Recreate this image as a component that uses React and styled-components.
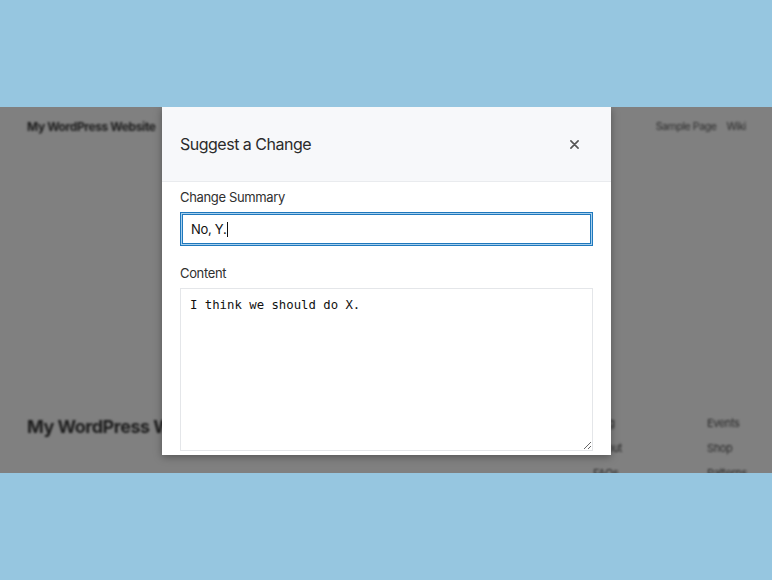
import React from "react";
import styled, { createGlobalStyle } from "styled-components";

const Global = createGlobalStyle`
  html, body { margin: 0; padding: 0; }
  body {
    background: #96c6e0;
    font-family: Inter, "Noto Sans", "Liberation Sans", sans-serif;
  }
`;

const Page = styled.div`
  width: 772px;
  height: 580px;
  padding-top: 107px;
  box-sizing: border-box;
  background: #96c6e0;
`;

const Frame = styled.div`
  position: relative;
  height: 366px;
  overflow: hidden;
  background: #808080;
`;

const Site = styled.div`
  height: 100%;
  display: flex;
  flex-direction: column;
  justify-content: space-between;
  color: #1c1c1c;
  filter: blur(0.9px);
`;

const SiteHeader = styled.header`
  display: flex;
  justify-content: space-between;
  align-items: center;
  height: 38px;
  padding: 0 26px 0 27px;
`;

const SiteTitle = styled.div`
  font-weight: 700;
  font-size: ${(p) => (p.$big ? "18px" : "12px")};
  letter-spacing: ${(p) => (p.$big ? "-0.5px" : "-0.4px")};
`;

const Nav = styled.nav`
  display: flex;
  gap: 10px;
  font-size: 10.5px;
  letter-spacing: -0.4px;
  color: #2a2a2a;
`;

const Footer = styled.footer`
  display: grid;
  grid-template-columns: 566px 114px 1fr;
  padding: 0 0 0 27px;
  height: 70px;
  margin-bottom: -10px;
`;

const FooterCol = styled.div`
  display: flex;
  flex-direction: column;
  gap: 11px;
  font-size: 11px;
  line-height: 14px;
  letter-spacing: -0.4px;
  color: #2a2a2a;
  padding-top: 3px;
`;

const FooterTitleWrap = styled.div`
  padding-top: 3px;
`;

const Modal = styled.div`
  position: absolute;
  left: 162px;
  top: 0;
  width: 449px;
  height: 348px;
  background: #fff;
  box-shadow: 0 2px 8px rgba(0, 0, 0, 0.35);
  display: flex;
  flex-direction: column;
  overflow: hidden;
`;

const ModalHeader = styled.div`
  height: 74px;
  flex: none;
  display: flex;
  align-items: center;
  justify-content: space-between;
  padding: 0 23px 0 18px;
  background: #f7f8fa;
  border-bottom: 1px solid #e9ebee;
`;

const ModalTitle = styled.h2`
  margin: 0;
  font-size: 16px;
  font-weight: 400;
  color: #2b2b2b;
  letter-spacing: -0.5px;
`;

const CloseButton = styled.button`
  border: 0;
  background: none;
  padding: 0;
  width: 28px;
  height: 28px;
  display: flex;
  align-items: center;
  justify-content: center;
  color: #555;
`;

const Body = styled.div`
  padding: 6px 18px 4px;
  display: flex;
  flex-direction: column;
`;

const Label = styled.label`
  font-size: 13px;
  line-height: 18px;
  color: #2f2f2f;
  letter-spacing: -0.35px;
  margin-bottom: 6px;
`;

const TextInput = styled.div`
  height: 34px;
  box-sizing: border-box;
  border: 1px solid #1f78bd;
  box-shadow: inset 0 0 0 1px #a9d0ec, inset 0 0 0 2px #1f78bd;
  display: flex;
  align-items: center;
  padding: 0 10px;
  font-size: 13px;
  color: #111;
  margin-bottom: 18px;
  letter-spacing: -0.3px;
`;

const Caret = styled.span`
  display: inline-block;
  width: 1px;
  height: 15px;
  background: #111;
  margin-left: 1px;
`;

const TextArea = styled.textarea`
  height: 163px;
  box-sizing: border-box;
  border: 1px solid #e4e6e9;
  padding: 9px 9px 8px;
  font-family: "DejaVu Sans Mono", "Liberation Mono", monospace;
  font-size: 12.3px;
  color: #111;
  resize: vertical;
  outline: none;
`;

export default function App() {
  return (
    <>
      <Global />
      <Page>
        <Frame>
          <Site>
            <SiteHeader>
              <SiteTitle>My WordPress Website</SiteTitle>
              <Nav>
                <span>Sample Page</span>
                <span>Wiki</span>
              </Nav>
            </SiteHeader>
            <Footer>
              <FooterTitleWrap>
                <SiteTitle $big>My WordPress Website</SiteTitle>
              </FooterTitleWrap>
              <FooterCol>
                <span>Blog</span>
                <span>About</span>
                <span>FAQs</span>
              </FooterCol>
              <FooterCol>
                <span>Events</span>
                <span>Shop</span>
                <span>Patterns</span>
              </FooterCol>
            </Footer>
          </Site>
          <Modal role="dialog" aria-label="Suggest a Change">
            <ModalHeader>
              <ModalTitle>Suggest a Change</ModalTitle>
              <CloseButton aria-label="Close">
                <svg width="9" height="9" viewBox="0 0 10 10">
                  <path d="M1 1L9 9M9 1L1 9" stroke="currentColor" strokeWidth="1.8" strokeLinecap="round" />
                </svg>
              </CloseButton>
            </ModalHeader>
            <Body>
              <Label>Change Summary</Label>
              <TextInput role="textbox">
                No, Y.<Caret />
              </TextInput>
              <Label>Content</Label>
              <TextArea readOnly value="I think we should do X." />
            </Body>
          </Modal>
        </Frame>
      </Page>
    </>
  );
}
